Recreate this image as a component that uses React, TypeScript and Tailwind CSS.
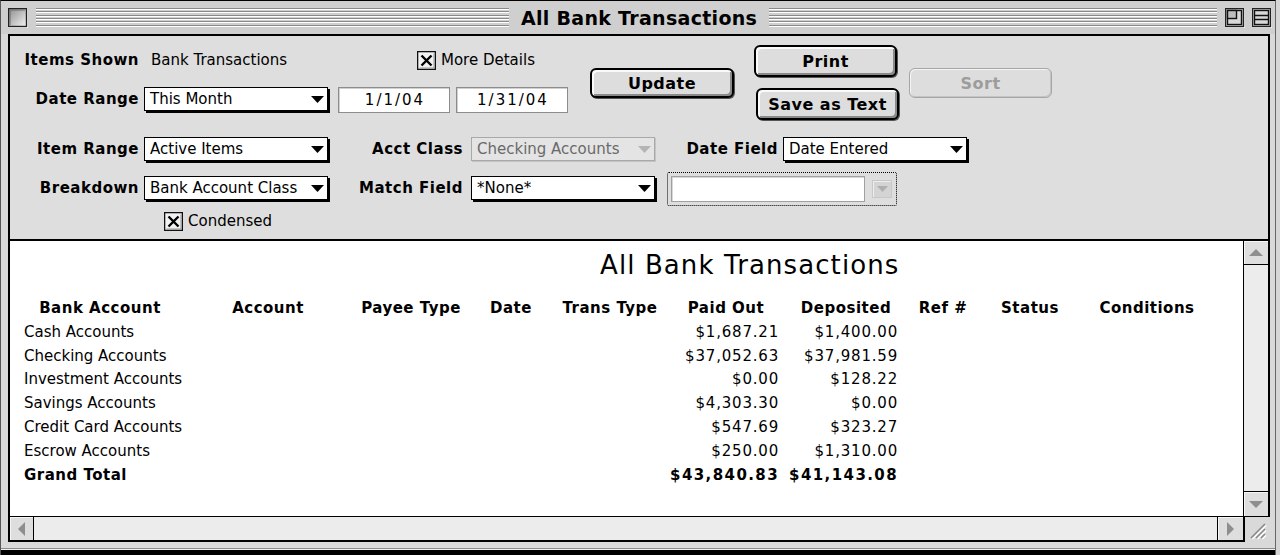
import React from "react";

function DownTri({ fill = "#000", w = 13, h = 7 }: { fill?: string; w?: number; h?: number }) {
  return (
    <svg width={w} height={h} viewBox={`0 0 ${w} ${h}`} className="shrink-0">
      <path d={`M0 0H${w}L${w / 2} ${h}Z`} fill={fill} />
    </svg>
  );
}

function Select({ text, className = "" }: { text: string; className?: string }) {
  return (
    <div
      className={`flex h-[24px] w-[184px] shrink-0 items-center justify-between border border-black bg-white pl-[5px] pr-[3px] text-[15px] shadow-[2px_2px_0_0_#000] ${className}`}
    >
      <span className="whitespace-nowrap leading-none">{text}</span>
      <DownTri />
    </div>
  );
}

function DisabledSelect({ text, className = "" }: { text: string; className?: string }) {
  return (
    <div
      className={`flex h-[24px] w-[184px] shrink-0 items-center justify-between border border-[#a9a9a9] bg-[#e4e4e4] pl-[5px] pr-[3px] text-[15px] text-[#6a6a6a] shadow-[1px_1px_0_0_#c4c4c4] ${className}`}
    >
      <span className="whitespace-nowrap leading-none">{text}</span>
      <DownTri fill="#b4b4b4" />
    </div>
  );
}

function Label({ children, className = "" }: { children: React.ReactNode; className?: string }) {
  return (
    <div
      className={`flex h-[24px] shrink-0 items-center justify-end whitespace-nowrap text-[15px] font-bold tracking-[0.5px] ${className}`}
    >
      {children}
    </div>
  );
}

function Checkbox() {
  return (
    <svg width="19" height="19" viewBox="0 0 19 19" className="shrink-0">
      <rect x="0.5" y="0.5" width="18" height="18" fill="#f2f2f2" stroke="#111" strokeWidth="1.6" />
      <path d="M17 2.5V17H2.5" fill="none" stroke="#9a9a9a" strokeWidth="1" />
      <path d="M4.5 4.5L14.5 14.5M14.5 4.5L4.5 14.5" stroke="#000" strokeWidth="2.4" />
    </svg>
  );
}

function DateField({ children, className = "" }: { children: React.ReactNode; className?: string }) {
  return (
    <div
      className={`flex h-[26px] w-[112px] shrink-0 items-center justify-center border border-[#8c8c8c] bg-white pl-[2px] text-[15px] tracking-[2px] shadow-[inset_1px_1px_0_0_#d0d0d0] ${className}`}
    >
      {children}
    </div>
  );
}

function Btn({
  children,
  className = "",
  disabled = false,
}: {
  children: React.ReactNode;
  className?: string;
  disabled?: boolean;
}) {
  return (
    <div
      className={`flex shrink-0 items-center justify-center rounded-[6px] bg-[#dddddd] pt-[1px] text-[16px] font-bold tracking-[0.5px] ${
        disabled
          ? "border border-[#a6a6a6] text-[#9c9c9c] shadow-[inset_1px_1px_0_0_#f4f4f4,inset_-1px_-1px_0_0_#c4c4c4]"
          : "border-2 border-black shadow-[inset_2px_2px_0_0_#fafafa,inset_-2px_-2px_0_0_#8a8a8a,1px_1px_0_0_#555]"
      } ${className}`}
    >
      {children}
    </div>
  );
}

function Stripes({ className = "" }: { className?: string }) {
  return (
    <div
      className={`h-[20px] bg-[repeating-linear-gradient(to_bottom,#8a8a8a_0px,#8a8a8a_1px,#ffffff_1px,#ffffff_2px,#cfcfcf_2px,#cfcfcf_3.34px)] ${className}`}
    />
  );
}

function CloseBox() {
  return (
    <svg width="20" height="20" viewBox="0 0 20 20" className="shrink-0">
      <defs>
        <linearGradient id="cb" x1="0" y1="0" x2="1" y2="1">
          <stop offset="0" stopColor="#8c8c8c" />
          <stop offset="1" stopColor="#f4f4f4" />
        </linearGradient>
      </defs>
      <rect x="0" y="0" width="20" height="20" fill="#fff" />
      <rect x="0.5" y="0.5" width="18" height="18" fill="url(#cb)" stroke="#222" strokeWidth="1.4" />
      <path d="M2 17V2H17" fill="none" stroke="#6a6a6a" strokeWidth="1" />
    </svg>
  );
}

function ZoomBox() {
  return (
    <svg width="20" height="20" viewBox="0 0 20 20" className="shrink-0">
      <rect x="0" y="0" width="20" height="20" fill="#fff" />
      <rect x="0.5" y="0.5" width="18" height="18" fill="#d8d8d8" stroke="#222" strokeWidth="1.4" />
      <rect x="2.5" y="2.5" width="14" height="14" fill="none" stroke="#111" strokeWidth="1.4" />
      <rect x="2.5" y="2.5" width="9" height="8" fill="#bdbdbd" stroke="#111" strokeWidth="1.4" />
    </svg>
  );
}

function CollapseBox() {
  return (
    <svg width="20" height="20" viewBox="0 0 20 20" className="shrink-0">
      <rect x="0" y="0" width="20" height="20" fill="#fff" />
      <rect x="0.5" y="0.5" width="18" height="18" fill="#d8d8d8" stroke="#222" strokeWidth="1.4" />
      <rect x="2.5" y="2.5" width="14" height="14" fill="none" stroke="#111" strokeWidth="1.4" />
      <path d="M2.5 7.5H16.5M2.5 11.5H16.5" stroke="#111" strokeWidth="1.4" />
    </svg>
  );
}

function UpTri({ fill = "#8e8e8e" }: { fill?: string }) {
  return (
    <svg width="14" height="7" viewBox="0 0 14 7">
      <path d="M0 7H14L7 0Z" fill={fill} />
    </svg>
  );
}

function LeftTri() {
  return (
    <svg width="7" height="14" viewBox="0 0 7 14">
      <path d="M7 0V14L0 7Z" fill="#8e8e8e" />
    </svg>
  );
}

function RightTri() {
  return (
    <svg width="7" height="14" viewBox="0 0 7 14">
      <path d="M0 0V14L7 7Z" fill="#8e8e8e" />
    </svg>
  );
}

function GrowBox() {
  return (
    <svg width="20" height="20" viewBox="0 0 20 20">
      <path d="M3 17L17 3M8 17L17 8M13 17L17 13" stroke="#8a8a8a" strokeWidth="1.6" />
      <path d="M4.5 18L18 4.5M9.5 18L18 9.5M14.5 18L18 14.5" stroke="#ffffff" strokeWidth="1.2" />
    </svg>
  );
}

const colW = ["w-[152px]", "w-[184px]", "w-[102px]", "w-[98px]", "w-[100px]", "w-[132px]", "w-[108px]", "w-[86px]", "w-[88px]", "w-[146px]"];
const headers = ["Bank Account", "Account", "Payee Type", "Date", "Trans Type", "Paid Out", "Deposited", "Ref #", "Status", "Conditions"];

const rows: [string, string, string][] = [
  ["Cash Accounts", "$1,687.21", "$1,400.00"],
  ["Checking Accounts", "$37,052.63", "$37,981.59"],
  ["Investment Accounts", "$0.00", "$128.22"],
  ["Savings Accounts", "$4,303.30", "$0.00"],
  ["Credit Card Accounts", "$547.69", "$323.27"],
  ["Escrow Accounts", "$250.00", "$1,310.00"],
];

export default function App() {
  return (
    <div className="h-[555px] w-[1280px] overflow-hidden bg-[#d6d6d6] font-['DejaVu_Sans',sans-serif] text-black">
      <div className="flex h-[555px] w-[1276px] flex-col border-l border-r border-t border-l-[#555] border-r-[#666] border-t-black bg-[#d9d9d9]">
        {/* Title bar */}
        <div className="flex h-[33px] shrink-0 items-center bg-[#cfcfcf] pl-[7px]">
          <CloseBox />
          <Stripes className="ml-[8px] w-[473px]" />
          <div className="whitespace-nowrap px-[12px] pt-[2px] text-[19px] font-bold leading-none tracking-[0.3px]">
            All Bank Transactions
          </div>
          <Stripes className="flex-1" />
          <div className="ml-[8px] flex items-center gap-[7px] pr-[3px]">
            <ZoomBox />
            <CollapseBox />
          </div>
        </div>

        {/* Content frame */}
        <div className="ml-[7px] flex w-[1262px] flex-col">
          <div className="flex flex-col border-l-2 border-r-2 border-t-2 border-black">
            {/* Header panel */}
            <div className="flex h-[205px] flex-col border-b-2 border-black bg-[#dedede]">
              <div className="flex h-[90px] items-start">
                <div className="flex flex-col pl-[14px] pt-[13px]">
                  <div className="flex h-[22px] items-center">
                    <Label className="h-[22px] w-[115px]">Items Shown</Label>
                    <span className="ml-[12px] w-[266px] whitespace-nowrap text-[15px]">Bank Transactions</span>
                    <Checkbox />
                    <span className="ml-[5px] whitespace-nowrap text-[15px]">More Details</span>
                  </div>
                  <div className="mt-[16px] flex h-[26px] items-start">
                    <Label className="w-[115px]">Date Range</Label>
                    <Select text="This Month" className="ml-[5px]" />
                    <DateField className="ml-[10px]">1/1/04</DateField>
                    <DateField className="ml-[6px]">1/31/04</DateField>
                  </div>
                </div>
                <Btn className="ml-[22px] mt-[32px] h-[30px] w-[144px]">Update</Btn>
                <div className="ml-[20px] mt-[9px] flex w-[145px] flex-col">
                  <Btn className="h-[32px] w-[143px]">Print</Btn>
                  <Btn className="ml-[2px] mt-[11px] h-[32px] w-[143px]">Save as Text</Btn>
                </div>
                <Btn disabled className="ml-[10px] mt-[32px] h-[30px] w-[143px]">
                  Sort
                </Btn>
              </div>

              <div className="mt-[11px] flex h-[26px] items-start pl-[14px]">
                <Label className="w-[115px]">Item Range</Label>
                <Select text="Active Items" className="ml-[5px]" />
                <Label className="w-[135px]">Acct Class</Label>
                <DisabledSelect text="Checking Accounts" className="ml-[8px]" />
                <Label className="w-[123px]">Date Field</Label>
                <Select text="Date Entered" className="ml-[5px]" />
              </div>

              <div className="mt-[13px] flex h-[26px] items-start pl-[14px]">
                <Label className="w-[115px]">Breakdown</Label>
                <Select text="Bank Account Class" className="ml-[5px]" />
                <Label className="w-[135px]">Match Field</Label>
                <Select text="*None*" className="ml-[8px]" />
                <div className="-mt-[4px] ml-[12px] flex h-[34px] w-[230px] items-center rounded-[2px] border border-dotted border-black pl-[3px]">
                  <div className="h-[26px] w-[194px] border border-[#a0a0a0] bg-white shadow-[inset_1px_1px_0_0_#d8d8d8]" />
                  <div className="ml-[7px] flex h-[18px] w-[20px] items-center justify-center border border-[#c8c8c8] bg-[#d4d4d4] shadow-[inset_1px_1px_0_0_#eee]">
                    <DownTri fill="#b0b0b0" w={11} h={6} />
                  </div>
                </div>
              </div>

              <div className="mt-[9px] flex items-center pl-[154px]">
                <Checkbox />
                <span className="ml-[5px] pt-[1px] text-[15px] leading-[19px]">Condensed</span>
              </div>
            </div>

            {/* Middle: report + vertical scrollbar */}
            <div className="flex h-[275px]">
              <div className="flex flex-1 flex-col bg-white pt-[10px]">
                <div className="h-[28px] whitespace-nowrap pl-[590px] text-[26px] leading-[28px] tracking-[1.1px]">
                  All Bank Transactions
                </div>
                <div className="mt-[17px] flex h-[24px] items-center pl-[14px] text-[15px] font-bold tracking-[0.5px]">
                  {headers.map((h, i) => (
                    <div key={h} className={`${colW[i]} shrink-0 whitespace-nowrap text-center`}>
                      {h}
                    </div>
                  ))}
                </div>
                {rows.map((r) => (
                  <div key={r[0]} className="flex h-[23.85px] items-center pl-[14px] text-[15px]">
                    <div className="w-[152px] shrink-0 whitespace-nowrap">{r[0]}</div>
                    <div className="w-[484px] shrink-0" />
                    <div className="flex w-[132px] shrink-0 justify-end whitespace-nowrap pr-[13px] tracking-[0.8px]">{r[1]}</div>
                    <div className="flex w-[108px] shrink-0 justify-end whitespace-nowrap pr-[2px] tracking-[0.8px]">{r[2]}</div>
                  </div>
                ))}
                <div className="flex h-[24px] items-center pl-[14px] text-[15px] font-bold">
                  <div className="w-[152px] shrink-0 whitespace-nowrap tracking-[0.5px]">Grand Total</div>
                  <div className="w-[484px] shrink-0" />
                  <div className="flex w-[132px] shrink-0 justify-end whitespace-nowrap pr-[13px] tracking-[1.4px]">$43,840.83</div>
                  <div className="flex w-[108px] shrink-0 justify-end whitespace-nowrap pr-[2px] tracking-[1.4px]">$41,143.08</div>
                </div>
              </div>
              <div className="flex w-[25px] shrink-0 flex-col border-l border-black bg-[#ececec]">
                <div className="flex h-[24px] items-center justify-center border-b border-black bg-[#dedede] shadow-[inset_1px_1px_0_0_#f6f6f6]">
                  <UpTri />
                </div>
                <div className="flex-1" />
                <div className="flex h-[25px] items-center justify-center border-t border-black bg-[#dedede] shadow-[inset_1px_1px_0_0_#f6f6f6]">
                  <DownTri fill="#8e8e8e" w={14} h={7} />
                </div>
              </div>
            </div>
          </div>

          {/* Bottom: horizontal scrollbar + grow box */}
          <div className="flex h-[26px]">
            <div className="flex w-[1237px] shrink-0 border-b-2 border-l-2 border-r-2 border-t border-black bg-[#ececec]">
              <div className="flex w-[24px] items-center justify-center border-r border-black bg-[#dedede] shadow-[inset_1px_1px_0_0_#f6f6f6]">
                <LeftTri />
              </div>
              <div className="flex-1" />
              <div className="flex w-[26px] items-center justify-center border-l border-black bg-[#dedede] shadow-[inset_1px_1px_0_0_#f6f6f6]">
                <RightTri />
              </div>
            </div>
            <div className="flex flex-1 items-end justify-center border-t border-black pb-[1px]">
              <GrowBox />
            </div>
          </div>
        </div>

        {/* bottom frame */}
        <div className="mt-[6px] h-[1px] bg-[#8a8a8a]" />
        <div className="h-[1px] bg-[#f0f0f0]" />
        <div className="flex-1 bg-black" />
      </div>
    </div>
  );
}
